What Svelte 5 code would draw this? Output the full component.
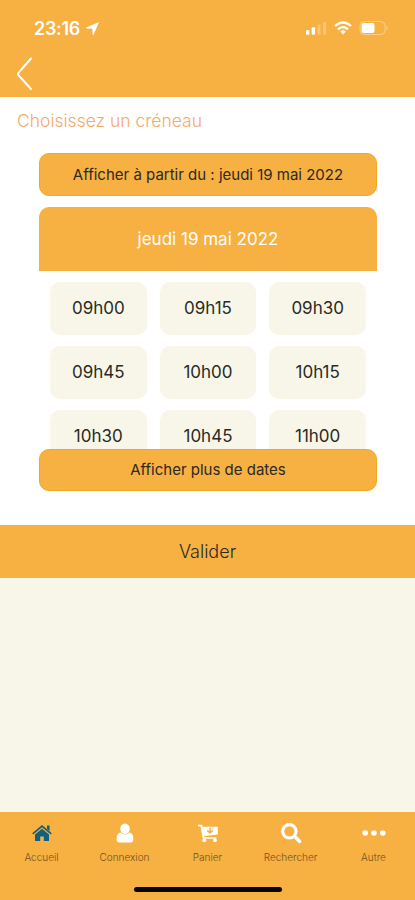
<script lang="ts">
  const slots = [
    "09h00", "09h15", "09h30",
    "09h45", "10h00", "10h15",
    "10h30", "10h45", "11h00"
  ];

  const tabs = [
    { id: "home", label: "Accueil" },
    { id: "user", label: "Connexion" },
    { id: "cart", label: "Panier" },
    { id: "search", label: "Rechercher" },
    { id: "more", label: "Autre" }
  ];

  let selected = $state("");
  let activeTab = $state("home");
</script>

<div class="screen">
  <header>
    <div class="status-bar">
      <div class="clock">
        <span>23:16</span>
        <svg width="15" height="15" viewBox="0 0 15 15">
          <path d="M14 1 L8.6 13.7 Q8 14.6 7.6 13.4 L7.3 7.8 L1.5 7.6 Q.3 7.2 1.3 6.6 Z" fill="#fff" />
        </svg>
      </div>
      <div class="indicators">
        <svg class="signal" width="22" height="14" viewBox="0 0 22 14">
          <rect x="1" y="9" width="3.4" height="4.8" rx="1.2" fill="#fff" />
          <rect x="6.7" y="6.2" width="3.4" height="7.6" rx="1.2" fill="#fff" />
          <rect x="12.5" y="3.4" width="3.2" height="10.4" rx="1.2" fill="#fff" opacity=".25" />
          <rect x="18" y="1" width="3.2" height="12.8" rx="1.2" fill="#fff" opacity=".25" />
        </svg>
        <svg class="wifi" width="18" height="14" viewBox="0 0 18 14" fill="none" stroke="#fff" stroke-width="2.3">
          <path d="M1 5 Q9 -2 17 5" />
          <path d="M4 8.3 Q9 4 14 8.3" />
          <path d="M6.2 10.5 Q9 8.2 11.8 10.5 L9 13.4 Z" fill="#fff" stroke="none" />
        </svg>
        <svg class="battery" width="30" height="16" viewBox="0 0 30 16">
          <rect x="1" y="1.5" width="25" height="13" rx="4" fill="none" stroke="#fff" opacity=".4" />
          <rect x="2.5" y="3" width="13" height="10" rx="2" fill="#fff" />
          <path d="M27.6 5.5 Q29.8 8 27.6 10.5 Z" fill="#fff" opacity=".5" />
        </svg>
      </div>
    </div>
    <button class="back" aria-label="Retour">
      <svg width="18" height="34" viewBox="0 0 18 34" fill="none" stroke="#fff" stroke-width="2.1" stroke-linecap="round" stroke-linejoin="round">
        <path d="M15 1.5 L2.6 15.6 Q1.6 17 2.6 18.4 L15 32" />
      </svg>
    </button>
  </header>

  <main>
    <h1>Choisissez un créneau</h1>
    <div class="picker">
      <button class="bar from">Afficher à partir du : jeudi 19 mai 2022</button>
      <section class="day">
        <h2>jeudi 19 mai 2022</h2>
        <div class="slots">
          {#each slots as slot}
            <button class="slot" class:selected={selected === slot} onclick={() => (selected = slot)}>{slot}</button>
          {/each}
        </div>
      </section>
      <button class="bar more">Afficher plus de dates</button>
    </div>
  </main>

  <button class="submit">Valider</button>

  <nav>
    {#each tabs as tab}
      <button class="tab" class:active={activeTab === tab.id} onclick={() => (activeTab = tab.id)}>
        <svg width="26" height="24" viewBox="0 0 26 24" fill="currentColor">
          {#if tab.id === "home"}
            <path d="M3.2 12.2 L13 4 L22.8 12.2 L21.8 13.4 L13 6.3 L4.2 13.4 Z" />
            <path d="M18 4.5 H20.6 V10 L18 7.9 Z" />
            <path d="M13 7.7 L20 13.4 V20 H14.8 V15.4 H11.2 V20 H6 V13.4 Z" />
          {:else if tab.id === "user"}
            <ellipse cx="13" cy="7.7" rx="4.8" ry="5.2" />
            <path d="M8.4 11.4 Q13 15.6 17.6 11.4 Q21.4 12.2 21.4 18 Q21.4 21.5 18.5 21.5 H7.5 Q4.6 21.5 4.6 18 Q4.6 12.2 8.4 11.4 Z" />
          {:else if tab.id === "cart"}
            <path d="M3 3.8 H7 L7.6 5.8 H22.8 V13.5 L9.2 15 L9.4 16.2 H21.3 V17.7 H7.8 L5.6 5.5 H3 Z" />
            <circle cx="9.3" cy="19.3" r="1.9" />
            <circle cx="20" cy="19.3" r="1.9" />
            <path d="M15 6.6 V11.8 M12.2 9.4 L15 12 L17.8 9.4" fill="none" stroke="#f7b042" stroke-width="1.5" />
          {:else if tab.id === "search"}
            <circle cx="11.4" cy="10.3" r="6.7" fill="none" stroke="currentColor" stroke-width="3.1" />
            <path d="M16.5 15.3 L21.7 20.5" stroke="currentColor" stroke-width="3.4" stroke-linecap="round" />
          {:else}
            <circle cx="4.2" cy="12" r="2.8" />
            <circle cx="13" cy="12" r="2.8" />
            <circle cx="21.8" cy="12" r="2.8" />
          {/if}
        </svg>
        <span>{tab.label}</span>
      </button>
    {/each}
    <div class="home-indicator"></div>
  </nav>
</div>

<style>
  :global(body) {
    margin: 0;
  }

  .screen {
    --orange: #f7b042;
    --cream: #f7f6e8;
    display: flex;
    flex-direction: column;
    height: 900px;
    overflow: hidden;
    background: var(--cream);
    color: #2b2a25;
    font-family: Inter, "Liberation Sans", sans-serif;
  }

  button {
    padding: 0;
    border: 0;
    background: none;
    color: inherit;
    font-family: inherit;
  }

  svg {
    display: block;
  }

  header {
    box-sizing: border-box;
    flex: none;
    height: 97px;
    padding-top: 16px;
    background: var(--orange);
  }

  .status-bar {
    display: flex;
    align-items: center;
    justify-content: space-between;
    height: 24px;
    padding: 0 26px 0 34px;
  }

  .clock,
  .indicators {
    display: flex;
    align-items: center;
  }

  .clock {
    gap: 5px;
    color: #fff;
    font-size: 18px;
    font-weight: 600;
    letter-spacing: -0.3px;
  }

  .signal {
    margin-right: 7px;
  }

  .wifi {
    margin-right: 7px;
  }

  .back {
    display: block;
    margin: 17px 0 0 16px;
  }

  main {
    box-sizing: border-box;
    flex: none;
    height: 427.5px;
    padding-top: 13px;
    background: #fff;
  }

  h1 {
    margin: 0 0 0 17px;
    color: #f4a96a;
    font-size: 17.5px;
    font-weight: 300;
    line-height: 22px;
  }

  .picker {
    display: flex;
    flex-direction: column;
    margin: 21px 38px 0 39px;
  }

  .bar {
    flex: none;
    height: 42.5px;
    border: 1px solid #f2a81d;
    border-radius: 10px;
    background: var(--orange);
    font-size: 15px;
    letter-spacing: 0;
  }

  .day {
    height: 241.5px;
    margin-top: 11.5px;
    overflow: hidden;
    border-radius: 10px 10px 0 0;
  }

  h2 {
    display: flex;
    align-items: center;
    justify-content: center;
    height: 63.5px;
    margin: 0;
    background: var(--orange);
    color: #fff;
    font-size: 17px;
    font-weight: 400;
  }

  .slots {
    display: grid;
    grid-template-columns: repeat(3, 1fr);
    grid-auto-rows: 53px;
    gap: 11px 13px;
    padding: 11px 11px 0;
  }

  .slot {
    border-radius: 10px;
    background: var(--cream);
    font-size: 17px;
  }

  .slot.selected {
    background: var(--orange);
  }

  .submit {
    flex: none;
    height: 53px;
    background: var(--orange);
    font-size: 18px;
    font-weight: 300;
  }

  nav {
    display: grid;
    grid-template-columns: repeat(5, 1fr);
    grid-template-rows: 52px auto;
    box-sizing: border-box;
    height: 88.5px;
    margin-top: auto;
    padding-top: 9px;
    background: var(--orange);
  }

  .tab {
    display: flex;
    flex-direction: column;
    align-items: center;
    color: #fff;
  }

  .tab.active svg {
    color: #126080;
  }

  .tab span {
    margin-top: 5px;
    color: #70501e;
    font-size: 10px;
    font-weight: 300;
    line-height: 14px;
  }

  .home-indicator {
    grid-column: 1 / -1;
    justify-self: center;
    width: 148px;
    height: 5px;
    margin-top: 14px;
    border-radius: 3px;
    background: #080703;
  }
</style>
